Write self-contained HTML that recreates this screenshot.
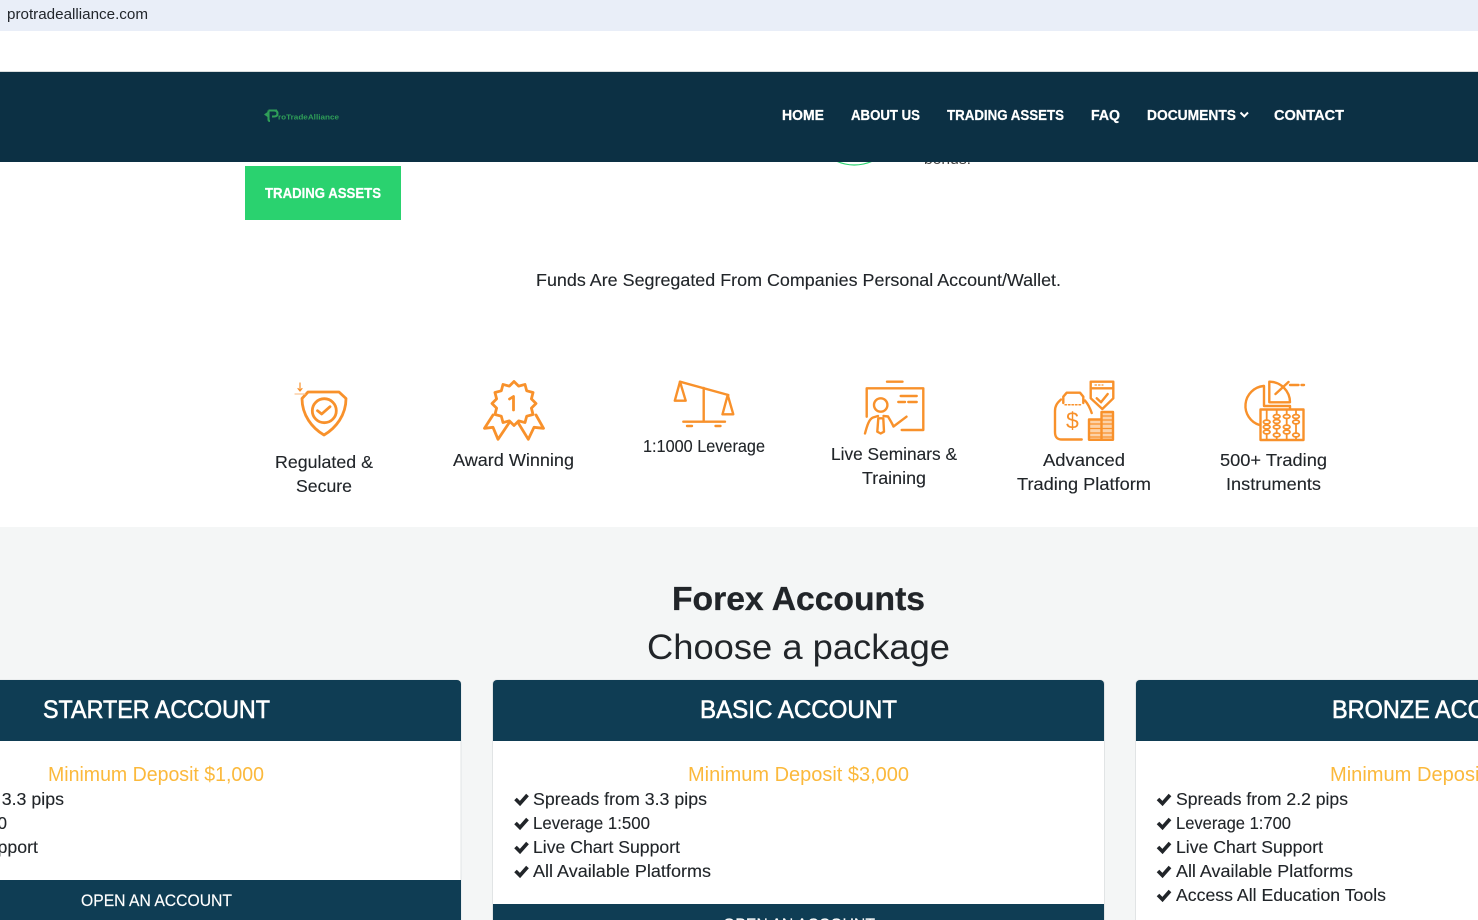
<!DOCTYPE html>
<html lang="en">
<head>
<meta charset="utf-8">
<title>ProTradeAlliance</title>
<style>
html,body{margin:0;padding:0;background:#fff;width:1478px;height:920px;overflow:hidden}
svg{display:block;position:absolute;left:0;top:0}
text{font-family:"Liberation Sans",sans-serif;fill:#212529}
.nav{font-size:14.5px;font-weight:700;fill:#fff;stroke:#fff;stroke-width:.25}
.lbl{font-size:17.5px;fill:#212529;stroke:#212529;stroke-width:.12}
.li{font-size:17.5px;fill:#212529;stroke:#212529;stroke-width:.12}
.min{font-size:20px;fill:#fbb93c}
.ch{font-size:25px;fill:#fff;stroke:#fff;stroke-width:.6}
.btn{font-size:16.5px;fill:#fff;stroke:#fff;stroke-width:.15}
.ic{fill:none;stroke:#f8912b;stroke-width:2.4;stroke-linecap:round;stroke-linejoin:round}
.chk{fill:none;stroke:#212529;stroke-width:3.6;stroke-linecap:butt;stroke-linejoin:miter}
</style>
</head>
<body>
<svg width="1478" height="920" viewBox="0 0 1478 920" xmlns="http://www.w3.org/2000/svg">
<rect width="1478" height="920" fill="#fff"/>
<rect width="1478" height="31" fill="#e9eef8"/>
<text x="7" y="19" font-size="15" textLength="141" lengthAdjust="spacingAndGlyphs" style="fill:#22262c">protradealliance.com</text>

<!-- content peeking under header -->
<path d="M836 161 Q854 169 873 161" fill="none" stroke="#2ad26f" stroke-width="1.2"/>
<text x="924" y="164" font-size="15" textLength="47" lengthAdjust="spacingAndGlyphs" style="fill:#444">bonus.</text>

<!-- header -->
<rect y="71" width="1478" height="1" fill="#d9dcdd"/>
<rect y="72" width="1478" height="90" fill="#0c3044"/>
<path d="M277 110.500H268.500M268.500 110.500V119.500Q268.500 121 270 121M268.500 110.500H274Q277.500 110.500 277.500 113.500Q277.500 116.500 274 116.500H272" fill="none" stroke="#2f9e58" stroke-width="2.100"/>
<path d="M264 114.500L267.500 112V117Z" fill="#2f9e58"/>
<text x="278" y="119.500" font-size="7.500" font-weight="700" textLength="61" lengthAdjust="spacingAndGlyphs" style="fill:#2f9e58">roTradeAlliance</text>

<text class="nav" x="782" y="120" textLength="42" lengthAdjust="spacingAndGlyphs">HOME</text>
<text class="nav" x="851" y="120" textLength="69" lengthAdjust="spacingAndGlyphs">ABOUT US</text>
<text class="nav" x="947" y="120" textLength="117" lengthAdjust="spacingAndGlyphs">TRADING ASSETS</text>
<text class="nav" x="1091" y="120" textLength="29" lengthAdjust="spacingAndGlyphs">FAQ</text>
<text class="nav" x="1147" y="120" textLength="89" lengthAdjust="spacingAndGlyphs">DOCUMENTS</text>
<path d="M1240.500 112.500L1244.300 116.300L1248 112.500" fill="none" stroke="#fff" stroke-width="2"/>
<text class="nav" x="1274" y="120" textLength="70" lengthAdjust="spacingAndGlyphs">CONTACT</text>

<!-- button -->
<rect x="245" y="166" width="156" height="54" fill="#2ad26f"/>
<text class="nav" x="265" y="198" textLength="116" lengthAdjust="spacingAndGlyphs">TRADING ASSETS</text>

<text class="lbl" x="536" y="286" textLength="525" lengthAdjust="spacingAndGlyphs">Funds Are Segregated From Companies Personal Account/Wallet.</text>

<!-- Icons -->
<g class="ic">
  <!-- shield -->
  <path d="M308 392H339L346 398.500C346 415 336 428 324 435C312 428 302 415 302 398.500Z" stroke-width="2.800"/>
  <circle cx="324.300" cy="410.700" r="12" stroke-width="2.800"/>
  <path d="M317.500 410.700L321.700 414L330 406.700" stroke-width="2.800"/>
  <path d="M300 383V391M298 388.500L300 391L302 388.500" stroke-width="1.200"/>
  <path d="M295 394H305" stroke-width="1.200" stroke="#fbc595"/>

  <!-- award -->
  <g transform="translate(514 403.500)" stroke-width="2.800">
    <polygon points="0,-22 4.660,-17.400 11,-19.050 12.700,-12.700 19.050,-11 17.400,-4.660 22,0 17.400,4.660 19.050,11 12.700,12.700 11,19.050 4.660,17.400 0,22 -4.660,17.400 -11,19.050 -12.700,12.700 -19.050,11 -17.400,4.660 -22,0 -17.400,-4.660 -19.050,-11 -12.700,-12.700 -11,-19.050 -4.660,-17.400"/>
  </g>
  <path d="M509.500 399L513.500 396.500V410" stroke-width="2.800"/>
  <path d="M493 415L484.500 428.300L493 427.300L498 439.300L509 423" stroke-width="2.800"/>
  <path d="M536 415L543.500 428.300L534 427.300L528.300 439.300L518.300 423" stroke-width="2.800"/>

  <!-- scale -->
  <path d="M680 381.700L728.300 395"/>
  <path d="M680 381.700L674.800 400.700H685.700Z"/>
  <path d="M727.700 395L722.500 414.300H733.300Z"/>
  <path d="M703.700 388V421.700M683.300 421.700H725M687 426H692M715.500 426H720.500"/>

  <!-- presenter -->
  <path d="M887 381.700H902.500"/>
  <path d="M866.700 416.700V388.300H923.300V430H901.700"/>
  <path d="M900.700 396H916.700M898.300 402H905M908.300 402H916.700"/>
  <circle cx="880.700" cy="405" r="6.700"/>
  <path d="M865 433.500C867 426 869 419 873 417.500L878 416M883.500 416L888 416.500C890 420 892 423 893.500 426.500L906.500 416.700"/>
  <path d="M878.300 418.300H883.300L884 431.700L880.700 433.500L877.300 431.700Z"/>

  <!-- bag -->
  <path d="M1063.300 403V396.700L1066.700 392.700H1080L1083.300 396.700V403"/>
  <path d="M1061 399.500C1057 403 1055 406 1055 411V432C1055 437 1057 439.500 1062 439.500H1081.700"/>
  <path d="M1085 400.500C1088 404 1090 408 1091.700 413"/>
  <path d="M1065 404.700H1081.700" stroke-dasharray="1.500 2" stroke-width="1.500"/>
  <path d="M1090.700 381.700H1113.300V398.300L1102.300 409L1090.700 398.300Z"/>
  <path d="M1090.700 388.300H1113.300"/>
  <path d="M1095 385H1103" stroke-dasharray="1.500 2" stroke-width="1.200"/>
  <path d="M1096.700 398.300L1101 402.300L1107.700 394" stroke-width="2.400"/>
  <path d="M1089 419.500H1101.500V439.800H1089ZM1101.500 412H1113V439.800H1101.500Z" fill="#fcd2a8"/>
  <path d="M1089 424H1101M1089 428.500H1101M1089 433H1101M1089 437H1101M1102 416H1113M1102 420H1113M1102 424H1113M1102 428.500H1113M1102 433H1113M1102 437H1113" stroke-width="1.300" stroke-linecap="butt"/>

  <!-- pie & abacus -->
  <path d="M1263.500 386A20 20 0 0 0 1259.500 425"/>
  <path d="M1264 386V406H1290V409"/>
  <path d="M1269.300 381.700V402.300H1290A20.700 20.700 0 0 0 1269.300 381.700Z"/>
  <path d="M1275.500 394L1288.500 382M1290 385H1298.500M1301.500 385H1304"/>
  <rect x="1260.500" y="409.500" width="43" height="30.500"/>
  <path d="M1266.700 409.500V440M1276.700 409.500V440M1286.700 409.500V440M1296 409.500V440" stroke-width="1.800"/>
  <g fill="#fff" stroke-width="1.800">
    <ellipse cx="1266.700" cy="422" rx="3.300" ry="1.900"/><ellipse cx="1266.700" cy="427" rx="3.300" ry="1.900"/><ellipse cx="1266.700" cy="432" rx="3.300" ry="1.900"/>
    <ellipse cx="1276.700" cy="416.500" rx="3.300" ry="1.900"/><ellipse cx="1276.700" cy="421.500" rx="3.300" ry="1.900"/><ellipse cx="1276.700" cy="427" rx="3.300" ry="1.900"/><ellipse cx="1276.700" cy="435" rx="3.300" ry="1.900"/>
    <ellipse cx="1286.700" cy="416.500" rx="3.300" ry="1.900"/><ellipse cx="1286.700" cy="427" rx="3.300" ry="1.900"/><ellipse cx="1286.700" cy="432" rx="3.300" ry="1.900"/>
    <ellipse cx="1296" cy="416.500" rx="3.300" ry="1.900"/><ellipse cx="1296" cy="422" rx="3.300" ry="1.900"/><ellipse cx="1296" cy="435" rx="3.300" ry="1.900"/>
  </g>
</g>
<text x="1066" y="428.500" font-size="23" style="fill:#f8912b">$</text>

<!-- Icon labels -->
<text class="lbl" x="275" y="468" textLength="98" lengthAdjust="spacingAndGlyphs">Regulated &amp;</text>
<text class="lbl" x="296" y="492" textLength="56" lengthAdjust="spacingAndGlyphs">Secure</text>
<text class="lbl" x="453" y="466" textLength="121" lengthAdjust="spacingAndGlyphs">Award Winning</text>
<text class="lbl" x="643" y="452" textLength="122" lengthAdjust="spacingAndGlyphs">1:1000 Leverage</text>
<text class="lbl" x="831" y="460" textLength="126" lengthAdjust="spacingAndGlyphs">Live Seminars &amp;</text>
<text class="lbl" x="862" y="484" textLength="64" lengthAdjust="spacingAndGlyphs">Training</text>
<text class="lbl" x="1043" y="466" textLength="82" lengthAdjust="spacingAndGlyphs">Advanced</text>
<text class="lbl" x="1017" y="490" textLength="134" lengthAdjust="spacingAndGlyphs">Trading Platform</text>
<text class="lbl" x="1220" y="466" textLength="107" lengthAdjust="spacingAndGlyphs">500+ Trading</text>
<text class="lbl" x="1226" y="490" textLength="95" lengthAdjust="spacingAndGlyphs">Instruments</text>

<!-- Gray section -->
<rect y="527" width="1478" height="393" fill="#f4f6f6"/>
<text x="672" y="610" font-size="33" font-weight="700" textLength="253" lengthAdjust="spacingAndGlyphs" stroke="#212529" stroke-width=".3" style="fill:#212529">Forex Accounts</text>
<text x="647" y="659" font-size="35" textLength="303" lengthAdjust="spacingAndGlyphs" style="fill:#212529">Choose a package</text>

<!-- Starter card -->
<rect x="-20" y="680" width="481" height="260" rx="4" fill="#fff" stroke="#e1e4e5"/>
<path d="M-20 741V684a4 4 0 0 1 4-4H457a4 4 0 0 1 4 4V741Z" fill="#0f3d54"/>
<text class="ch" x="43" y="718" textLength="227" lengthAdjust="spacingAndGlyphs">STARTER ACCOUNT</text>
<text class="min" x="48" y="781" textLength="216" lengthAdjust="spacingAndGlyphs">Minimum Deposit $1,000</text>
<text class="li" x="-110" y="805" textLength="174" lengthAdjust="spacingAndGlyphs">Spreads from 3.3 pips</text>
<text class="li" x="-110" y="829" textLength="117" lengthAdjust="spacingAndGlyphs">Leverage 1:500</text>
<text class="li" x="-110" y="853" textLength="148" lengthAdjust="spacingAndGlyphs">Live Chart Support</text>
<rect x="-20" y="880" width="481" height="40" fill="#0f3d54"/>
<text class="btn" x="81" y="906" textLength="151" lengthAdjust="spacingAndGlyphs">OPEN AN ACCOUNT</text>

<!-- Basic card -->
<rect x="492.500" y="680" width="612" height="260" rx="4" fill="#fff" stroke="#e1e4e5"/>
<path d="M493 741V684a4 4 0 0 1 4-4H1100a4 4 0 0 1 4 4V741Z" fill="#0f3d54"/>
<text class="ch" x="700" y="718" textLength="197" lengthAdjust="spacingAndGlyphs">BASIC ACCOUNT</text>
<text class="min" x="688" y="781" textLength="221" lengthAdjust="spacingAndGlyphs">Minimum Deposit $3,000</text>
<path class="chk" d="M515.500 799L520 803.500L527.500 795M515.500 823L520 827.500L527.500 819M515.500 847L520 851.500L527.500 843M515.500 871L520 875.500L527.500 867"/>
<text class="li" x="533" y="805" textLength="174" lengthAdjust="spacingAndGlyphs">Spreads from 3.3 pips</text>
<text class="li" x="533" y="829" textLength="117" lengthAdjust="spacingAndGlyphs">Leverage 1:500</text>
<text class="li" x="533" y="853" textLength="147" lengthAdjust="spacingAndGlyphs">Live Chart Support</text>
<text class="li" x="533" y="877" textLength="178" lengthAdjust="spacingAndGlyphs">All Available Platforms</text>
<rect x="493" y="904" width="611" height="16" fill="#0f3d54"/>
<text class="btn" x="723" y="930" textLength="152" lengthAdjust="spacingAndGlyphs">OPEN AN ACCOUNT</text>

<!-- Bronze card -->
<rect x="1135.500" y="680" width="612" height="260" rx="4" fill="#fff" stroke="#e1e4e5"/>
<path d="M1136 741V684a4 4 0 0 1 4-4H1747V741Z" fill="#0f3d54"/>
<text class="ch" x="1332" y="718" textLength="219" lengthAdjust="spacingAndGlyphs">BRONZE ACCOUNT</text>
<text class="min" x="1330" y="781" textLength="222" lengthAdjust="spacingAndGlyphs">Minimum Deposit $5,000</text>
<path class="chk" d="M1158 799L1162.500 803.500L1170 795M1158 823L1162.500 827.500L1170 819M1158 847L1162.500 851.500L1170 843M1158 871L1162.500 875.500L1170 867M1158 895L1162.500 899.500L1170 891"/>
<text class="li" x="1176" y="805" textLength="172" lengthAdjust="spacingAndGlyphs">Spreads from 2.2 pips</text>
<text class="li" x="1176" y="829" textLength="115" lengthAdjust="spacingAndGlyphs">Leverage 1:700</text>
<text class="li" x="1176" y="853" textLength="147" lengthAdjust="spacingAndGlyphs">Live Chart Support</text>
<text class="li" x="1176" y="877" textLength="177" lengthAdjust="spacingAndGlyphs">All Available Platforms</text>
<text class="li" x="1176" y="901" textLength="210" lengthAdjust="spacingAndGlyphs">Access All Education Tools</text>
</svg>
</body>
</html>
